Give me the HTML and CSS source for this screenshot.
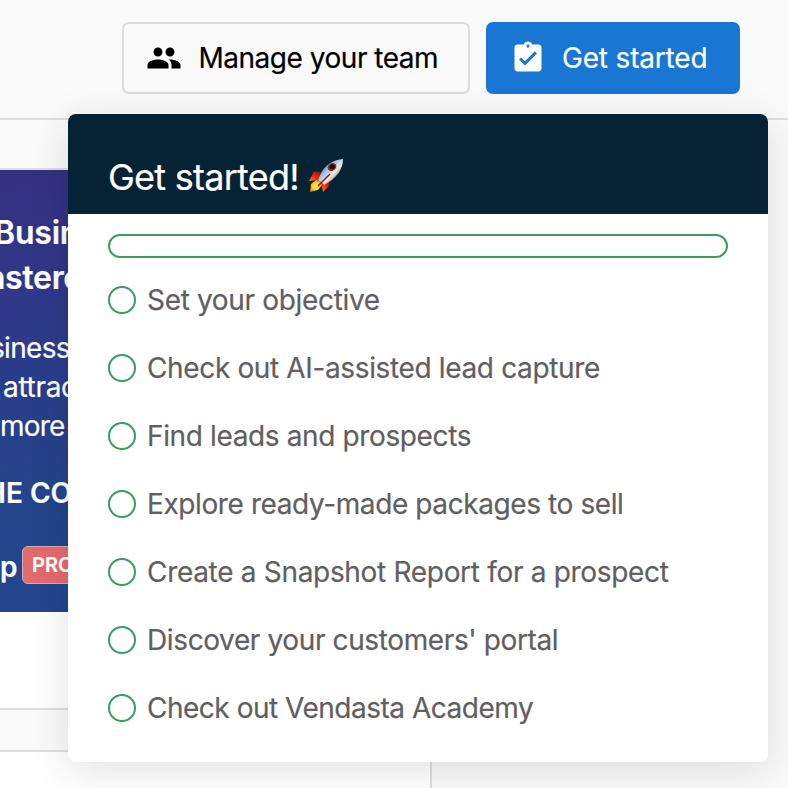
FILE: index.html
```html
<!DOCTYPE html>
<html lang="en">
<head>
<meta charset="utf-8">
<title>Get started</title>
<link rel="stylesheet" href="styles.css">
</head>
<body>
<div class="page">
  <header class="toolbar">
    <button class="btn btn-outline">
      <svg class="icon" viewBox="0 0 24 24"><path d="M16 11c1.66 0 2.99-1.34 2.99-3S17.66 5 16 5s-3 1.34-3 3 1.34 3 3 3zm-8 0c1.66 0 2.99-1.34 2.99-3S9.66 5 8 5 5 6.34 5 8s1.34 3 3 3zm0 2c-2.33 0-7 1.17-7 3.5V19h14v-2.500c0-2.330-4.670-3.500-7-3.500zm8 0c-.29 0-.62.02-.97.05 1.160.840 1.970 1.970 1.970 3.450V19h6v-2.500c0-2.330-4.670-3.500-7-3.500z"/></svg>
      <span class="team-label">Manage your team</span>
    </button>
    <button class="btn btn-primary">
      <svg class="icon" viewBox="0 0 24 24"><path d="M19 3h-4.180C14.400 1.840 13.300 1 12 1s-2.400.840-2.820 2H5c-1.100 0-2 .9-2 2v14c0 1.100.9 2 2 2h14c1.100 0 2-.9 2-2V5c0-1.100-.9-2-2-2zm-7 0c.55 0 1 .45 1 1s-.45 1-1 1-1-.45-1-1 .45-1 1-1zm-2 14l-4-4 1.410-1.410L10 14.170l6.590-6.590L18 9l-8 8z"/></svg>
      <span class="start-label">Get started</span>
    </button>
  </header>
  <main class="content">
    <section class="banner">
      <h2 class="banner-title"><span class="t1">Business</span><span class="t2">astered</span></h2>
      <p class="banner-copy"><span class="c1">siness</span><span class="c2">attract</span><span class="c3">more</span></p>
      <div class="banner-cta">HE COURSE</div>
      <div class="banner-tag"><span class="tag-text">p</span><span class="pro">PRO</span></div>
    </section>
    <div class="banner-foot"></div>
    <div class="card"></div>
  </main>
  <aside class="popover">
    <div class="popover-head">
      <h1 class="popover-title">Get started!</h1>
      <svg class="rocket" viewBox="0 0 36 36">
        <defs>
          <linearGradient id="body" x1="0" y1="0" x2="1" y2="1"><stop offset=".2" stop-color="#348bc9"/><stop offset=".43" stop-color="#a9cce6"/><stop offset=".58" stop-color="#eeeae5"/><stop offset=".8" stop-color="#777d84"/></linearGradient>
          <linearGradient id="fin" x1="0" y1="1" x2="1" y2="0"><stop offset="0" stop-color="#ff8b18"/><stop offset=".45" stop-color="#ef2609"/><stop offset="1" stop-color="#8d1005"/></linearGradient>
          <radialGradient id="flame"><stop offset="0" stop-color="#fff36a"/><stop offset=".6" stop-color="#f6cf28"/><stop offset="1" stop-color="#f38b12"/></radialGradient>
        </defs>
        <path fill="url(#fin)" d="M13 14L6 13.500 1 23l9-1z"/>
        <path fill="url(#fin)" d="M15 25l7-5-1 8-6 6-1-5z"/>
        <path fill="url(#body)" d="M10 22C14 10 22 2 35 1c0 10-6 19-19 26z"/>
        <path fill="#d1261a" d="M10 22l6 5-3 2-6-5z"/>
        <path fill="url(#flame)" d="M8 22l4 1 2 4-4 5-8 2 1-8z"/>
        <path stroke="#941009" stroke-width="1.500" d="M10 28l12-12"/>
        <ellipse cx="24" cy="9" rx="4.600" ry="3.800" transform="rotate(-35 24 9)" fill="#bd1e12"/>
        <ellipse cx="24.300" cy="9" rx="2.900" ry="2.500" transform="rotate(-35 24 9)" fill="#150f16"/>
      </svg>
    </div>
    <div class="popover-body">
      <div class="progress"></div>
      <ul class="tasks">
        <li><i class="ring"></i><span class="k1">Set your objective</span></li>
        <li><i class="ring"></i><span class="k2">Check out AI-assisted lead capture</span></li>
        <li><i class="ring"></i><span class="k3">Find leads and prospects</span></li>
        <li><i class="ring"></i><span class="k4">Explore ready-made packages to sell</span></li>
        <li><i class="ring"></i><span class="k5">Create a Snapshot Report for a prospect</span></li>
        <li><i class="ring"></i><span class="k6">Discover your customers' portal</span></li>
        <li><i class="ring"></i><span class="k7">Check out Vendasta Academy</span></li>
      </ul>
    </div>
  </aside>
</div>
</body>
</html>
```
FILE: styles.css
```css
* { box-sizing: border-box; }
body { margin: 0; font-family: Inter, "Liberation Sans", sans-serif; -webkit-text-stroke: .2px currentColor; }
.page { position: relative; width: 788px; height: 788px; overflow: hidden; background: #fafafa; }
.toolbar { height: 120px; padding: 22px 48px 0 0; display: flex; justify-content: flex-end; gap: 16px; border-bottom: 2px solid #dedede; }
.btn { height: 72px; display: flex; align-items: center; gap: 16px; border-radius: 7px; font: 400 28px/36px Inter, sans-serif; white-space: nowrap; -webkit-text-stroke: .2px currentColor; }
.btn-outline { width: 348px; padding: 0 0 0 22px; gap: 16.500px; border: 2px solid #dbdbdb; background: #fafafa; color: #000; }
.btn-primary { width: 254px; padding: 0 0 0 24px; border: 0; background: #1976d2; color: #fff; }
.team-label { letter-spacing: -.48px; }
.start-label { letter-spacing: -.18px; }
.icon { width: 36px; height: 36px; flex: none; fill: currentColor; }
.icon path { stroke: none; }
.content { width: 432px; height: 668px; padding-top: 48px; display: flex; flex-direction: column; }
.banner { height: 444px; border-top: 2px solid #dedede; padding-top: 40px; color: #fff; overflow: hidden; background: linear-gradient(170deg, #35307f 0, #30388a 25%, #23458b 65%, #22468e 100%); }
.banner span { white-space: pre; }
.banner-title { margin: 0; font-weight: 600; font-size: 32px; line-height: 45px; }
.banner-title span, .banner-copy span { display: block; }
.t1 { margin-left: -6px; letter-spacing: -.2px; }
.t2 { margin-left: -13px; letter-spacing: -.3px; }
.banner-copy { margin: 29px 0 0; font-size: 28px; line-height: 39px; }
.c1 { margin-left: -10px; letter-spacing: -.7px; }
.c2 { margin-left: 3px; letter-spacing: -.3px; }
.c3 { letter-spacing: -.8px; }
.banner-cta { margin: 28px 0 0 -15px; font-size: 28px; line-height: 39px; font-weight: 600; }
.banner-tag { margin-top: 31px; display: flex; align-items: center; gap: 5px; font-size: 28px; font-weight: 600; line-height: 38px; }
.tag-text { width: 17px; padding-top: 4px; }
.pro { height: 38px; padding: 0 9px; border: 1px solid #ccb0b8; border-radius: 6px; background: #e46a6c; font-size: 20px; line-height: 37px; }
.banner-foot { height: 98px; background: #fff; border-bottom: 2px solid #dedede; }
.card { margin-top: 40px; height: 38px; border: solid #dedede; border-width: 2px 2px 0 0; background: #fff; }
.popover { position: absolute; left: 68px; top: 114px; width: 700px; height: 648px; border-radius: 8px; background: #fff; overflow: hidden; box-shadow: 0 8px 40px rgba(0,0,0,.12); }
.popover-head { height: 100px; padding: 41px 40px 0; display: flex; background: #062336; color: #fff; }
.popover-title { width: 200px; margin: 0; font-size: 36px; line-height: 44px; font-weight: 400; letter-spacing: -.74px; white-space: nowrap; }
.rocket { width: 36px; height: 36px; margin-top: 3px; flex: none; }
.popover-body { padding: 20px 40px; }
.progress { height: 24px; border: 2px solid #3b9b61; border-radius: 12px; }
.tasks { list-style: none; margin: 8px 0 0; padding: 0; }
.tasks li { height: 68px; display: flex; align-items: center; gap: 11px; font-size: 28px; line-height: 36px; color: #606060; white-space: nowrap; }
.ring { width: 28px; height: 28px; flex: none; border: 2px solid #3b9b61; border-radius: 50%; }
.k1 { letter-spacing: -.33px; }
.k2 { letter-spacing: -.36px; }
.k3 { letter-spacing: -.37px; }
.k4 { letter-spacing: -.4px; }
.k5 { letter-spacing: -.31px; }
.k6 { letter-spacing: -.38px; }
.k7 { letter-spacing: -.49px; }
```
